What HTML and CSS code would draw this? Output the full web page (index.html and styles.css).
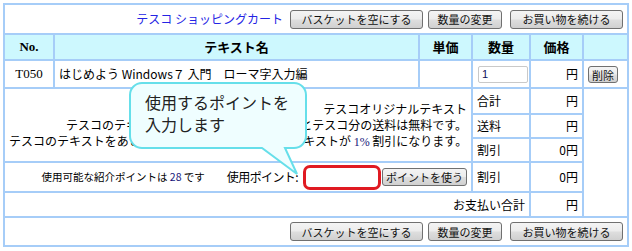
FILE: index.html
```html
<!DOCTYPE html>
<html lang="ja">
<head>
<meta charset="utf-8">
<title>テスコ ショッピングカート</title>
<link rel="stylesheet" href="styles.css">
</head>
<body>
<div class="page">
  <table class="cart">
    <colgroup>
      <col class="c-no"><col class="c-name"><col class="c-unit"><col class="c-qty"><col class="c-price"><col class="c-act">
    </colgroup>
    <tr class="r-title">
      <td colspan="6" class="bar">
        <div class="bar-in">
          <span class="title">テスコ ショッピングカート</span>
          <button class="btn b-empty">バスケットを空にする</button>
          <button class="btn b-qty">数量の変更</button>
          <button class="btn b-cont">お買い物を続ける</button>
        </div>
      </td>
    </tr>
    <tr class="r-head">
      <th class="serif">No.</th>
      <th>テキスト名</th>
      <th>単価</th>
      <th>数量</th>
      <th>価格</th>
      <th></th>
    </tr>
    <tr class="r-item">
      <td class="serif center">T050</td>
      <td class="name">はじめよう Windows７ 入門　ローマ字入力編</td>
      <td></td>
      <td><input class="qty" type="text" value="1"></td>
      <td class="num">円</td>
      <td class="act"><button class="btn del">削除</button></td>
    </tr>
    <tr class="r-sum">
      <td colspan="3" rowspan="3" class="notes">
        <div>テスコオリジナルテキスト</div>
        <div>テスコのテキストを3冊以上ご購入いただくとテスコ分の送料は無料です。</div>
        <div>テスコのテキストをあと2冊お買い上げいただくと全テキストが <span class="pct">1%</span> 割引になります。</div>
      </td>
      <td>合計</td>
      <td class="num">円</td>
      <td rowspan="5" class="blank"></td>
    </tr>
    <tr class="r-ship">
      <td>送料</td>
      <td class="num">円</td>
    </tr>
    <tr class="r-disc">
      <td>割引</td>
      <td class="num">0円</td>
    </tr>
    <tr class="r-point">
      <td colspan="3" class="points">
        <div class="points-in">
          <span class="avail">使用可能な紹介ポイントは <span class="pts">28</span> です</span>
          <span class="plabel">使用ポイント:</span>
          <input class="pinput" type="text" value="">
          <button class="btn b-use">ポイントを使う</button>
        </div>
      </td>
      <td>割引</td>
      <td class="num">0円</td>
    </tr>
    <tr class="r-pay">
      <td colspan="4" class="num">お支払い合計</td>
      <td class="num">円</td>
    </tr>
    <tr class="r-foot">
      <td colspan="6" class="bar">
        <div class="bar-in">
          <button class="btn b-empty">バスケットを空にする</button>
          <button class="btn b-qty">数量の変更</button>
          <button class="btn b-cont">お買い物を続ける</button>
        </div>
      </td>
    </tr>
  </table>

  <div class="callout">
    <svg class="bubble" width="184" height="100" viewBox="0 0 184 100">
      <path d="M14,2 H166 A12,12 0 0 1 178,14 V55 A12,12 0 0 1 166,67 H157 L169,93 L134,67 H14 A12,12 0 0 1 2,55 V14 A12,12 0 0 1 14,2 Z" fill="#effeff" stroke="#66dfea" stroke-width="2"/>
    </svg>
    <div class="callout-text">使用するポイントを<br>入力します</div>
  </div>
</div>
</body>
</html>
```

FILE: styles.css
```css
* { box-sizing: border-box; }

body {
  margin: 0;
  background: #ffffff;
  color: #000000;
  font-family: "Noto Sans CJK JP", "Noto Sans", sans-serif;
  font-size: 12px;
}

.page {
  position: relative;
  width: 632px;
  height: 251px;
  padding: 3px;
}

.cart {
  border-collapse: collapse;
  table-layout: fixed;
  width: 626px;
  border: 2px solid #a6cdf8;
}

.cart td,
.cart th {
  border: 2px solid #a6cdf8;
  padding: 0 4px;
  vertical-align: middle;
  white-space: nowrap;
  line-height: 16px;
}

.c-no { width: 50px; }
.c-name { width: 365px; }
.c-unit { width: 53px; }
.c-qty { width: 58px; }
.c-price { width: 53px; }
.c-act { width: 45px; }

.r-title { height: 30px; }
.r-head { height: 26px; }
.r-item { height: 28px; }
.r-sum { height: 26px; }
.r-ship { height: 24px; }
.r-disc { height: 24px; }
.r-point { height: 30px; }
.r-pay { height: 25px; }
.r-foot { height: 29px; }

.r-head th {
  background: #cdf8fe;
  font-size: 13px;
  font-weight: bold;
  text-align: center;
}

.serif {
  font-family: "Liberation Serif", serif;
  font-size: 13px;
}

.center { text-align: center; }
.num { text-align: right; }

.name { padding-left: 5px; }

.bar { padding: 0 7px 0 4px; }

.bar-in {
  display: flex;
  justify-content: flex-end;
  align-items: center;
}

.title {
  color: #2424e4;
  font-size: 12px;
  margin-right: 7px;
}

.btn {
  font-family: "Noto Sans CJK JP", sans-serif;
  font-size: 11px;
  color: #111111;
  height: 19px;
  line-height: 16px;
  padding: 0;
  border: 1px solid #707070;
  border-radius: 3px;
  background: linear-gradient(#f4f4f4, #ececec 48%, #dedede 52%, #d0d0d0);
}

.b-empty { width: 133px; }
.b-qty { width: 74px; margin-left: 5px; }
.b-cont { width: 113px; margin-left: 8px; }

.del {
  width: 30px;
  height: 17px;
  font-size: 11px;
  margin-left: 0;
}

.act { padding-left: 3px; }

.qty {
  width: 50px;
  height: 17px;
  border: 1px solid #c9c9c9;
  border-radius: 2px;
  padding: 0 3px;
  font-family: "Liberation Sans", sans-serif;
  font-size: 11px;
  color: #10105a;
  margin-left: 1px;
}

.notes {
  text-align: right;
  padding-right: 6px;
  line-height: 16px;
}

.pct {
  font-family: "Liberation Serif", serif;
  color: #16167a;
}

.points { padding-right: 5px; }

.points-in {
  display: flex;
  justify-content: flex-end;
  align-items: center;
}

.avail {
  font-size: 10.5px;
  margin-right: 22px;
}

.pts { color: #16167a; }

.plabel {
  font-size: 12px;
  letter-spacing: -0.6px;
  margin-right: 5px;
}

.pinput {
  width: 78px;
  height: 25px;
  border: 3px solid #e01a22;
  border-radius: 7px;
  background: #ffffff;
  margin-right: 1px;
}

.b-use { width: 85px; height: 18px; }

.blank { background: #ffffff; }

.callout {
  position: absolute;
  left: 128px;
  top: 81px;
  width: 184px;
  height: 100px;
}

.bubble { display: block; }

.callout-text {
  position: absolute;
  left: 17px;
  top: 10px;
  font-size: 16px;
  line-height: 22px;
  color: #222222;
}
```
